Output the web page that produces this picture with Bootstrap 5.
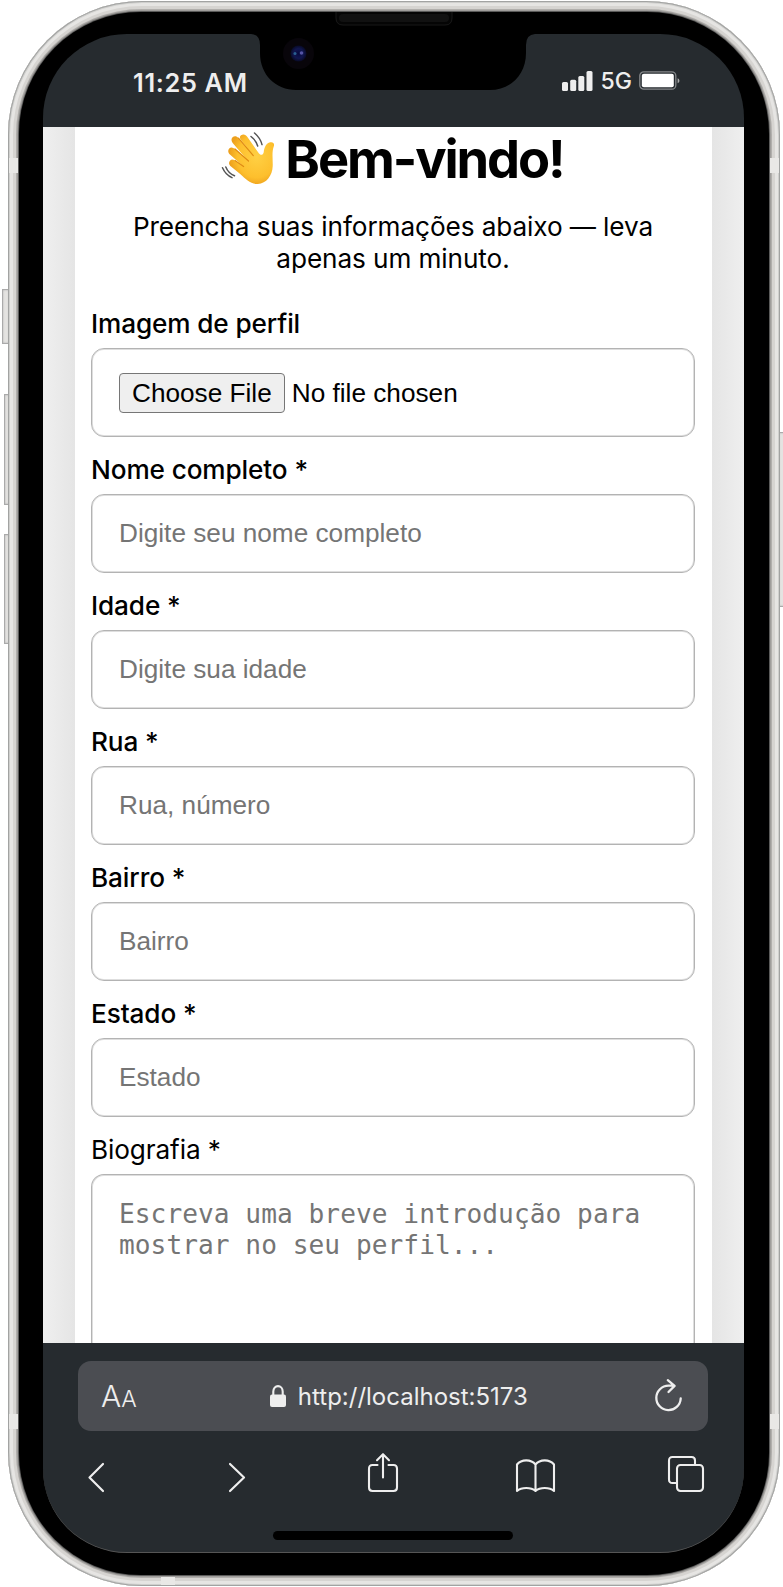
<!DOCTYPE html>
<html lang="pt-BR">
<head>
<meta charset="utf-8">
<meta name="viewport" content="width=device-width, initial-scale=1">
<title>Bem-vindo!</title>
<link href="https://cdn.jsdelivr.net/npm/bootstrap@5.3.0/dist/css/bootstrap.min.css" rel="stylesheet">
<style>
  body { margin: 0; background: #fff; color: #000; font: 400 26.2px/1.22 Inter, "Liberation Sans", sans-serif; overflow: hidden; }
  svg { display: block; overflow: visible; fill: none; }
  .stage { width: 783px; height: 1587px; overflow: hidden; }
  .phone { width: 772px; height: 1585px; margin: 1px 0 0 8px; padding: 11px; border-radius: 134px;
    background: #d5d4d1; box-shadow: inset 0 0 0 1px #a2a3a2, inset 0 0 0 2px #cfcfcd, inset 0 0 0 5px #e6e5e3, inset 0 0 0 8px #d6d4d1, inset 0 0 3px 9px #aaa7a4; }
  .bezel { height: 1563px; padding: 22px 25px 22px 23.5px; background: #000; border-radius: 122px; box-shadow: 0 0 2px 1px #333; }
  .display-area { height: 1519px; border-radius: 84px; background: #262b2f; border-bottom: 1px solid #555; }
  .side-key { background: #e4e3e1; border: 1px solid #aaa; box-shadow: inset 0 0 2px #aaa; z-index: -1; }
  .band { width: 9px; height: 15px; background: #e9e8e6; }
  .status { height: 93px; color: #eee; padding: 0 64px 0 90.5px; }
  .clock { font-size: 25.3px; font-weight: 600; line-height: 30px; margin-top: 34px; letter-spacing: .68px; }
  .net { font-size: 23px; font-weight: 500; line-height: 30px; margin: 1px 7px 0 8px; }
  .page { height: 1216px; padding: 0 32.5px; background: linear-gradient(90deg, #efefef, #e5e5e5 32px, #e5e5e5 670px, #efefef); }
  .sheet { height: 100%; background: #fff; padding: 0 16.5px 0 16px; }
  .title { font-size: 52.4px; font-weight: 700; line-height: 64px; letter-spacing: -2.1px; margin: 0; }
  .lede { line-height: 32px; margin: 20px 0 0; letter-spacing: -.1px; }
  .form-label { display: block; font-weight: 500; line-height: 32px; height: 32px; margin: 0 0 8.5px; letter-spacing: -.12px; }
  .field { margin-bottom: 16.5px; }
  .box, .box.form-control { height: 79px; padding: 0 26.5px 0 27px; border: 1px solid #b3b3b3; box-shadow: inset 0 0 0 1px #dedede; border-radius: 13px; background: #fff; color: #000;
    font: 26.2px/30px "Liberation Sans", Arial, sans-serif; }
  .box::placeholder { color: #757575 !important; opacity: 1; }
  .box.picker { height: 89px; }
  .choose { height: 40px; padding: 0 12px; border: 1.5px solid #767676; border-radius: 4px; background: #efefef; color: #000; font: inherit; line-height: 39px; }
  textarea.box.form-control { height: 172px; padding-top: 24px; border-bottom: 0; border-radius: 13px 13px 0 0; resize: none; overflow: hidden; font: 26.2px/31px "DejaVu Sans Mono", monospace; letter-spacing: .03px; }
  .chrome-bar { height: 209px; padding: 18px 36px 0 35.5px; color: #eee; }
  .address { height: 70px; padding: 0 26px 0 23px; background: #4b4d52; border-radius: 13px; }
  .url { font-size: 24px; line-height: 30px; font-weight: 400; margin-top: 1px; }
  .tools { margin: 0 4px 0 10px; padding-top: 22px; height: 61px; }
  .indicator { width: 240px; height: 9px; border-radius: 5px; background: #000; margin: 39px auto 0; }
</style>
</head>
<body>
<div class="stage position-relative">
  <span class="side-key position-absolute" style="left:2px;top:289px;width:8px;height:55px"></span>
  <span class="side-key position-absolute" style="left:4px;top:394px;width:6px;height:111px"></span>
  <span class="side-key position-absolute" style="left:4px;top:534px;width:6px;height:110px"></span>
  <span class="side-key position-absolute" style="left:778px;top:432px;width:8px;height:175px"></span>

  <main class="phone">
    <div class="bezel">
      <div class="display-area overflow-hidden">
        <header class="status d-flex justify-content-between align-items-start">
          <span class="clock text-nowrap">11:25 AM</span>
          <div class="d-flex align-items-center" style="margin-top:31px">
            <svg width="31" height="20"><g fill="#eee"><rect x="0" y="11" width="6" height="9" rx="1.5"/><rect x="8.2" y="8.7" width="6" height="11.3" rx="1.5"/><rect x="16.3" y="5" width="6" height="15" rx="1.5"/><rect x="24.5" y="0" width="6" height="20" rx="1.5"/></g></svg>
            <span class="net">5G</span>
            <svg width="41" height="19"><rect x=".8" y=".8" width="36" height="17.4" rx="4" stroke="#85888a" stroke-width="1.3"/><rect x="2.8" y="2.8" width="32" height="13.4" rx="2" fill="#fff"/><path d="M38.6 7.2c2.4.7 2.4 4.3 0 5z" fill="#aaa"/></svg>
          </div>
        </header>

        <section class="page overflow-hidden">
          <div class="sheet">
            <div class="d-flex justify-content-center align-items-start">
              <svg width="52" height="53" viewBox="0 0 52 53" style="margin:5px 11px 0 0" aria-hidden="true">
                <defs><radialGradient id="skin" cx=".62" cy=".45" r=".6"><stop offset="0" stop-color="#ffd044"/><stop offset=".7" stop-color="#fdbf2d"/><stop offset="1" stop-color="#eda01d"/></radialGradient></defs>
                <path fill="url(#skin)" d="M19 3.2C21.500 1.500 24 2.700 25.400 5L37 21.500C39.200 24 41.300 22.600 41.700 20.200C42.300 15.300 44 11.400 48.200 10.300C51 9.700 52.600 11.500 51.900 13.900C49.500 20.300 51 27.500 50.700 34.200C50.300 43.500 44.400 51.500 35.800 52C28.500 52.300 23.800 47 18.200 42L9 34.600C6.600 32.600 6.500 30.100 8.200 28.400C9.500 27.200 11.300 27.300 13 28.600L20.300 33.400L8.200 22.800C6 20.800 5.600 18.200 7.200 16.500C8.800 15 11.100 15.300 13 17L25 27.700L11.100 11.500C9 9 9 6.600 10.800 5.100C12.600 3.700 14.900 4.300 16.500 6.200L30.300 22.300L18.900 8C17.500 5.800 17.500 4.400 19 3.200Z"/>
                <path d="M13 17L26.500 29M16.500 6.200L31.300 23.600M13 28.600L21.600 34.500" stroke="#df8b12" stroke-width="1.200" stroke-linecap="round"/>
                <path d="M29 4.500Q34 8.200 35.700 14M32.500 1Q38.500 6.200 40 12.600M3.800 35Q6.300 41.300 12.500 43.700M.5 35.700Q3.500 42.700 10 45.600" stroke="#555" stroke-width="1.500" stroke-linecap="round"/>
              </svg>
              <h1 class="title text-nowrap">Bem-vindo!</h1>
            </div>
            <p class="lede text-center">Preencha suas informações abaixo — leva<br>apenas um minuto.</p>

            <form style="margin-top:32.500px">
              <div class="field"><label class="form-label">Imagem de perfil</label>
                <div class="box picker d-flex align-items-center"><button type="button" class="choose text-nowrap">Choose File</button><span style="margin-left:7px">No file chosen</span></div></div>
              <div class="field"><label class="form-label" for="nome">Nome completo *</label><input id="nome" class="form-control box" placeholder="Digite seu nome completo"></div>
              <div class="field"><label class="form-label" for="idade">Idade *</label><input id="idade" class="form-control box" placeholder="Digite sua idade"></div>
              <div class="field"><label class="form-label" for="rua">Rua *</label><input id="rua" class="form-control box" placeholder="Rua, número"></div>
              <div class="field"><label class="form-label" for="bairro">Bairro *</label><input id="bairro" class="form-control box" placeholder="Bairro"></div>
              <div class="field"><label class="form-label" for="estado">Estado *</label><input id="estado" class="form-control box" placeholder="Estado"></div>
              <div><label class="form-label fw-normal" for="bio">Biografia *</label><textarea id="bio" class="form-control box" placeholder="Escreva uma breve introdução para mostrar no seu perfil..."></textarea></div>
            </form>
          </div>
        </section>

        <footer class="chrome-bar">
          <div class="address d-flex justify-content-between align-items-center">
            <span class="text-nowrap" style="font-weight:300;line-height:36px;margin-top:2px"><span style="font-size:30px">A</span><span style="font-size:23px">A</span></span>
            <div class="d-flex align-items-center" style="margin-left:6px">
              <svg width="16" height="22" style="margin-right:12px"><rect y="9.500" width="16" height="12.500" rx="2" fill="#eee"/><path d="M3.300 10V6.500a4.700 5.400 0 0 1 9.400 0V10" stroke="#eee" stroke-width="2.100"/></svg>
              <span class="url text-nowrap">http://localhost:5173</span>
            </div>
            <svg width="27" height="32" style="margin-top:-3px" stroke="#eee" stroke-width="2.300" stroke-linecap="round" stroke-linejoin="round"><path d="M25.700 19.500A12.200 12.200 0 1 1 13.500 6.700H19M12.800 1.200L19.600 6.900L13.500 13"/></svg>
          </div>
          <nav class="tools d-flex align-items-end">
            <svg width="16" height="29" stroke="#eee" stroke-width="2.200" stroke-linecap="round" stroke-linejoin="round"><path d="M15 1L1.500 14.500L15 28"/></svg>
            <svg width="16" height="29" style="margin-left:125px" stroke="#eee" stroke-width="2.200" stroke-linecap="round" stroke-linejoin="round"><path d="M1 1L15 14.500L1 28"/></svg>
            <svg width="30" height="39" style="margin-left:123px" stroke="#eee" stroke-width="2.100" stroke-linecap="round" stroke-linejoin="round"><path d="M9.500 12H4.500Q1 12 1 15.500V34.500Q1 38 4.500 38H25.500Q29 38 29 34.500V15.500Q29 12 25.500 12H20.500M15 24.500V1.200M9 7.200L15 1.200L21 7.200"/></svg>
            <svg width="39" height="33" style="margin-left:118px" stroke="#eee" stroke-width="2.100" stroke-linecap="round" stroke-linejoin="round"><path d="M19.500 5.500C15 0 5.500 0 1 5.500V32C5.500 28 15 28 19.500 32C24 28 33.500 28 38 32V5.500C33.500 0 24 0 19.500 5.500V31"/></svg>
            <svg width="36" height="36" style="margin-left:113px" stroke="#eee" stroke-width="2.100"><rect x="9" y="9" width="26" height="26" rx="3.500"/><path d="M8.500 27H4.500Q1 27 1 23.500V4.500Q1 1 4.500 1H23.500Q27 1 27 4.500V8.500"/></svg>
          </nav>
          <div class="indicator"></div>
        </footer>
      </div>
    </div>
  </main>

  <!-- antenna bands across the metal frame -->
  <span class="band position-absolute" style="left:9px;top:158px"></span>
  <span class="band position-absolute" style="left:770px;top:158px"></span>
  <span class="band position-absolute" style="left:9px;top:1414px"></span>
  <span class="band position-absolute" style="left:770px;top:1414px"></span>
  <span class="band position-absolute" style="left:161px;top:1577px;width:14px;height:8px"></span>

  <!-- notch, speaker and front camera over the status bar -->
  <svg class="position-absolute" style="left:250px;top:10px" width="286" height="82" aria-hidden="true">
    <defs><radialGradient id="lens"><stop offset="0" stop-color="#070a3e"/><stop offset=".6" stop-color="#11164f"/><stop offset="1" stop-color="#080a25"/></radialGradient></defs>
    <path d="M0 24H1Q10 24.500 10 35V43C10 65 26 80 46 80H240C260 80 276 65 276 43V35Q276 24.500 285 24H286V22H0Z" fill="#000"/>
    <path d="M86 2V8Q86 15 93 15H195Q202 15 202 8V2" fill="#050505" stroke="#191919" stroke-width="1"/>
    <rect x="89" y="4" width="110" height="8" rx="4" fill="#111"/>
    <circle cx="48.500" cy="43.500" r="15.500" fill="#08050a"/><circle cx="48.500" cy="43.500" r="8" fill="url(#lens)"/>
    <circle cx="45" cy="43.500" r="1.500" fill="#2a6090"/><circle cx="51.500" cy="43" r="1.800" fill="#5555a5"/>
  </svg>
</div>
<script src="https://cdn.jsdelivr.net/npm/bootstrap@5.3.0/dist/js/bootstrap.bundle.min.js"></script>
</body>
</html>
